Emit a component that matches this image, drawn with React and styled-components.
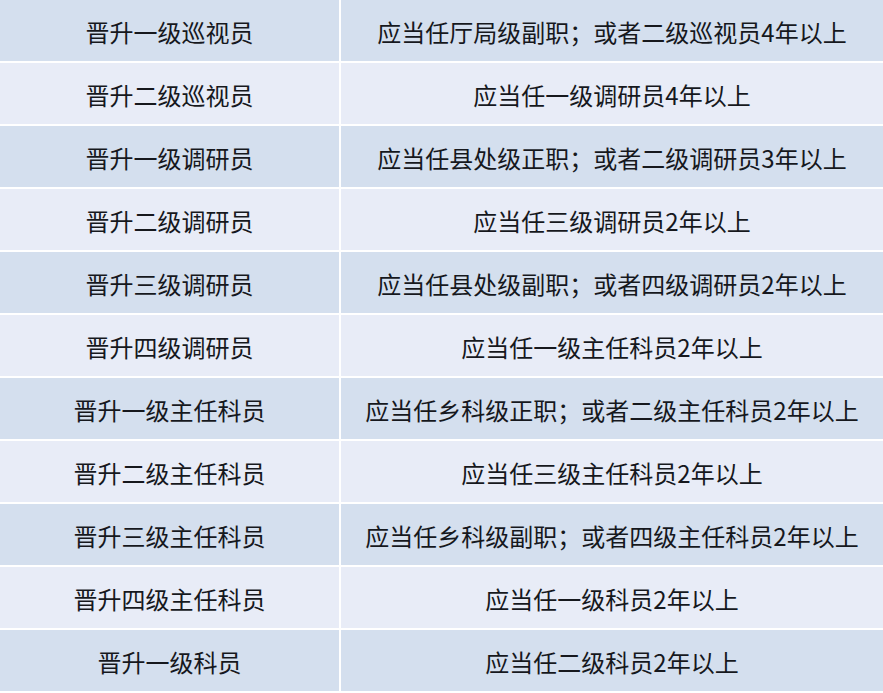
import React from "react";
import styled, { createGlobalStyle } from "styled-components";

const rows = [
  ["晋升一级巡视员", "应当任厅局级副职；或者二级巡视员4年以上"],
  ["晋升二级巡视员", "应当任一级调研员4年以上"],
  ["晋升一级调研员", "应当任县处级正职；或者二级调研员3年以上"],
  ["晋升二级调研员", "应当任三级调研员2年以上"],
  ["晋升三级调研员", "应当任县处级副职；或者四级调研员2年以上"],
  ["晋升四级调研员", "应当任一级主任科员2年以上"],
  ["晋升一级主任科员", "应当任乡科级正职；或者二级主任科员2年以上"],
  ["晋升二级主任科员", "应当任三级主任科员2年以上"],
  ["晋升三级主任科员", "应当任乡科级副职；或者四级主任科员2年以上"],
  ["晋升四级主任科员", "应当任一级科员2年以上"],
  ["晋升一级科员", "应当任二级科员2年以上"],
];

const GlobalStyle = createGlobalStyle`
  html, body {
    margin: 0;
    padding: 0;
    background: #ffffff;
  }
  body {
    font-family: "Noto Sans CJK SC", "Noto Sans", sans-serif;
  }
`;

const Table = styled.div`
  width: 883px;
  height: 693px;
  display: grid;
  grid-template-columns: 339px 1fr;
  grid-auto-rows: 61px;
  column-gap: 2px;
  row-gap: 2px;
  background: #ffffff;
`;

const Cell = styled.div`
  display: flex;
  align-items: center;
  justify-content: center;
  padding-top: 2px;
  box-sizing: border-box;
  font-size: 24px;
  color: #16181d;
  white-space: nowrap;
  background: ${(p) => (p.$dark ? "#d4dfee" : "#e8ecf7")};
`;

export default function App() {
  return (
    <>
      <GlobalStyle />
      <Table>
        {rows.map(([rank, need], i) => (
          <React.Fragment key={rank}>
            <Cell $dark={i % 2 === 0}>{rank}</Cell>
            <Cell $dark={i % 2 === 0}>{need}</Cell>
          </React.Fragment>
        ))}
      </Table>
    </>
  );
}
